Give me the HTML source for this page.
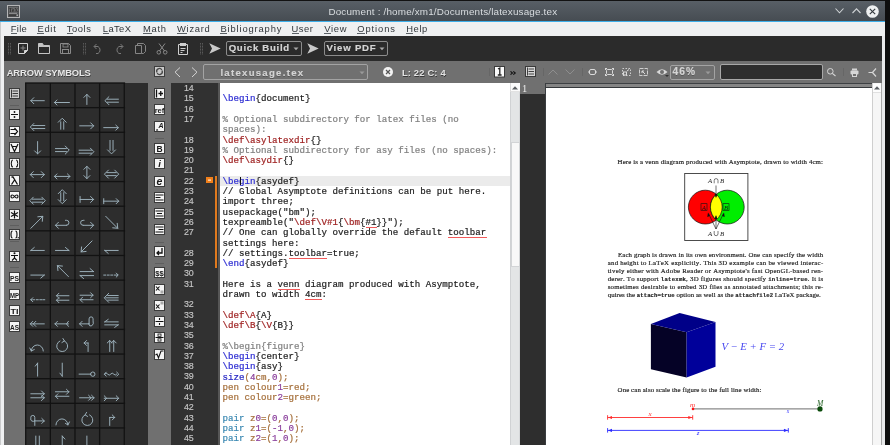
<!DOCTYPE html><html><head><meta charset="utf-8"><style>*{margin:0;padding:0;box-sizing:border-box}
html,body{width:890px;height:445px;overflow:hidden;background:#121212}
body{position:relative;-webkit-font-smoothing:antialiased}
.a{position:absolute}
.t{white-space:pre;font-kerning:none}
svg{overflow:visible}
</style></head><body><div id="root" class="a" style="left:0;top:0;width:890px;height:445px;will-change:transform"><div class="a" style="left:0px;top:1px;width:885px;height:444px;background:#eff0f1"></div>
<div class="a" style="left:0px;top:1px;width:1px;height:444px;background:#c9cacb"></div>
<div class="a" style="left:0px;top:1px;width:885px;height:20px;background:linear-gradient(#585f66,#464c52)"></div>
<div class="a" style="left:0px;top:21px;width:885px;height:1px;background:#3daee9"></div>
<svg class="a" style="left:7px;top:5px;" width="13" height="13" viewBox="0 0 13 13"><rect x="0.5" y="0.5" width="12" height="12" fill="#4e5052" stroke="#b4b5b6"/><rect x="2" y="2" width="9" height="5.5" fill="#6a6b6c"/><text x="6.5" y="6.6" font-size="5.5" font-family="Liberation Serif" font-weight="bold" fill="#333" text-anchor="middle">TeX</text><rect x="2" y="7.8" width="8" height="1" fill="#9a9a9a"/><rect x="2" y="9.5" width="7" height="1.6" fill="#3a3a3a"/><rect x="9.5" y="9.5" width="1.5" height="1.5" fill="#aaa"/></svg>
<div class="a t" style="left:328.40px;top:7.12px;font:9.9px/9.9px 'Liberation Sans',sans-serif;color:#d9dde0;letter-spacing:0.170px;">Document : /home/xm1/Documents/latexusage.tex</div>
<svg class="a" style="left:835px;top:8px;" width="9" height="6" viewBox="0 0 9 6"><polyline points="0.5,0.5 4.5,4.8 8.5,0.5" fill="none" stroke="#cfd3d6" stroke-width="1.1"/></svg>
<svg class="a" style="left:852px;top:8px;" width="9" height="6" viewBox="0 0 9 6"><polyline points="0.5,5 4.5,0.8 8.5,5" fill="none" stroke="#cfd3d6" stroke-width="1.1"/></svg>
<svg class="a" style="left:866px;top:5px;" width="13" height="13" viewBox="0 0 13 13"><circle cx="6.5" cy="6.5" r="6.3" fill="#eef0f1"/><path d="M3.8,3.8 L9.2,9.2 M9.2,3.8 L3.8,9.2" stroke="#31363b" stroke-width="1.1"/></svg>
<div class="a t" style="left:10.80px;top:23.54px;font:9.4px/9.4px 'Liberation Sans',sans-serif;color:#31363b;letter-spacing:0.263px;">File</div>
<div class="a" style="left:11px;top:33px;width:6px;height:1px;background:#5b6166"></div>
<div class="a t" style="left:37.40px;top:23.54px;font:9.4px/9.4px 'Liberation Sans',sans-serif;color:#31363b;letter-spacing:0.751px;">Edit</div>
<div class="a" style="left:37px;top:33px;width:7px;height:1px;background:#5b6166"></div>
<div class="a t" style="left:66.70px;top:23.54px;font:9.4px/9.4px 'Liberation Sans',sans-serif;color:#31363b;letter-spacing:0.603px;">Tools</div>
<div class="a" style="left:67px;top:33px;width:6px;height:1px;background:#5b6166"></div>
<div class="a t" style="left:102.80px;top:23.54px;font:9.4px/9.4px 'Liberation Sans',sans-serif;color:#31363b;letter-spacing:0.401px;">LaTeX</div>
<div class="a" style="left:103px;top:33px;width:6px;height:1px;background:#5b6166"></div>
<div class="a t" style="left:143.00px;top:23.54px;font:9.4px/9.4px 'Liberation Sans',sans-serif;color:#31363b;letter-spacing:0.726px;">Math</div>
<div class="a" style="left:143px;top:33px;width:9px;height:1px;background:#5b6166"></div>
<div class="a t" style="left:177.00px;top:23.54px;font:9.4px/9.4px 'Liberation Sans',sans-serif;color:#31363b;letter-spacing:0.726px;">Wizard</div>
<div class="a" style="left:177px;top:33px;width:10px;height:1px;background:#5b6166"></div>
<div class="a t" style="left:220.40px;top:23.54px;font:9.4px/9.4px 'Liberation Sans',sans-serif;color:#31363b;letter-spacing:0.856px;">Bibliography</div>
<div class="a" style="left:220px;top:33px;width:7px;height:1px;background:#5b6166"></div>
<div class="a t" style="left:291.50px;top:23.54px;font:9.4px/9.4px 'Liberation Sans',sans-serif;color:#31363b;letter-spacing:0.538px;">User</div>
<div class="a" style="left:292px;top:33px;width:7px;height:1px;background:#5b6166"></div>
<div class="a t" style="left:324.30px;top:23.54px;font:9.4px/9.4px 'Liberation Sans',sans-serif;color:#31363b;letter-spacing:0.656px;">View</div>
<div class="a" style="left:324px;top:33px;width:7px;height:1px;background:#5b6166"></div>
<div class="a t" style="left:357.30px;top:23.54px;font:9.4px/9.4px 'Liberation Sans',sans-serif;color:#31363b;letter-spacing:0.901px;">Options</div>
<div class="a" style="left:357px;top:33px;width:8px;height:1px;background:#5b6166"></div>
<div class="a t" style="left:406.20px;top:23.54px;font:9.4px/9.4px 'Liberation Sans',sans-serif;color:#31363b;letter-spacing:0.617px;">Help</div>
<div class="a" style="left:406px;top:33px;width:7px;height:1px;background:#5b6166"></div>
<div class="a" style="left:4px;top:36px;width:878px;height:25px;background:#2b2b2b"></div>
<svg class="a" style="left:7.5px;top:43px;" width="3" height="12" viewBox="0 0 3 12"><rect x="0" y="0.0" width="1" height="0.9" fill="#5e5e5e"/><rect x="0" y="1.5" width="1" height="0.9" fill="#5e5e5e"/><rect x="0" y="3.0" width="1" height="0.9" fill="#5e5e5e"/><rect x="0" y="4.5" width="1" height="0.9" fill="#5e5e5e"/><rect x="0" y="6.0" width="1" height="0.9" fill="#5e5e5e"/><rect x="0" y="7.5" width="1" height="0.9" fill="#5e5e5e"/><rect x="0" y="9.0" width="1" height="0.9" fill="#5e5e5e"/><rect x="0" y="10.5" width="1" height="0.9" fill="#5e5e5e"/><rect x="2" y="0.0" width="1" height="0.9" fill="#5e5e5e"/><rect x="2" y="1.5" width="1" height="0.9" fill="#5e5e5e"/><rect x="2" y="3.0" width="1" height="0.9" fill="#5e5e5e"/><rect x="2" y="4.5" width="1" height="0.9" fill="#5e5e5e"/><rect x="2" y="6.0" width="1" height="0.9" fill="#5e5e5e"/><rect x="2" y="7.5" width="1" height="0.9" fill="#5e5e5e"/><rect x="2" y="9.0" width="1" height="0.9" fill="#5e5e5e"/><rect x="2" y="10.5" width="1" height="0.9" fill="#5e5e5e"/></svg>
<svg class="a" style="left:82.5px;top:43px;" width="3" height="12" viewBox="0 0 3 12"><rect x="0" y="0.0" width="1" height="0.9" fill="#5e5e5e"/><rect x="0" y="1.5" width="1" height="0.9" fill="#5e5e5e"/><rect x="0" y="3.0" width="1" height="0.9" fill="#5e5e5e"/><rect x="0" y="4.5" width="1" height="0.9" fill="#5e5e5e"/><rect x="0" y="6.0" width="1" height="0.9" fill="#5e5e5e"/><rect x="0" y="7.5" width="1" height="0.9" fill="#5e5e5e"/><rect x="0" y="9.0" width="1" height="0.9" fill="#5e5e5e"/><rect x="0" y="10.5" width="1" height="0.9" fill="#5e5e5e"/><rect x="2" y="0.0" width="1" height="0.9" fill="#5e5e5e"/><rect x="2" y="1.5" width="1" height="0.9" fill="#5e5e5e"/><rect x="2" y="3.0" width="1" height="0.9" fill="#5e5e5e"/><rect x="2" y="4.5" width="1" height="0.9" fill="#5e5e5e"/><rect x="2" y="6.0" width="1" height="0.9" fill="#5e5e5e"/><rect x="2" y="7.5" width="1" height="0.9" fill="#5e5e5e"/><rect x="2" y="9.0" width="1" height="0.9" fill="#5e5e5e"/><rect x="2" y="10.5" width="1" height="0.9" fill="#5e5e5e"/></svg>
<svg class="a" style="left:199.5px;top:43px;" width="3" height="12" viewBox="0 0 3 12"><rect x="0" y="0.0" width="1" height="0.9" fill="#5e5e5e"/><rect x="0" y="1.5" width="1" height="0.9" fill="#5e5e5e"/><rect x="0" y="3.0" width="1" height="0.9" fill="#5e5e5e"/><rect x="0" y="4.5" width="1" height="0.9" fill="#5e5e5e"/><rect x="0" y="6.0" width="1" height="0.9" fill="#5e5e5e"/><rect x="0" y="7.5" width="1" height="0.9" fill="#5e5e5e"/><rect x="0" y="9.0" width="1" height="0.9" fill="#5e5e5e"/><rect x="0" y="10.5" width="1" height="0.9" fill="#5e5e5e"/><rect x="2" y="0.0" width="1" height="0.9" fill="#5e5e5e"/><rect x="2" y="1.5" width="1" height="0.9" fill="#5e5e5e"/><rect x="2" y="3.0" width="1" height="0.9" fill="#5e5e5e"/><rect x="2" y="4.5" width="1" height="0.9" fill="#5e5e5e"/><rect x="2" y="6.0" width="1" height="0.9" fill="#5e5e5e"/><rect x="2" y="7.5" width="1" height="0.9" fill="#5e5e5e"/><rect x="2" y="9.0" width="1" height="0.9" fill="#5e5e5e"/><rect x="2" y="10.5" width="1" height="0.9" fill="#5e5e5e"/></svg>
<svg class="a" style="left:17px;top:42px;" width="12" height="13" viewBox="0 0 12 13"><path d="M1.5,1.5 H10.5 V8.5 L7.5,11.5 H1.5 Z" fill="none" stroke="#d4d4d4" stroke-width="1"/><path d="M7.5,11.5 V8.5 H10.5" fill="#d4d4d4" stroke="#d4d4d4"/><path d="M6,3.5 V8.5 M3.5,6 H8.5" stroke="#8a8a8a" stroke-width="1"/></svg>
<svg class="a" style="left:37px;top:42px;" width="14" height="13" viewBox="0 0 14 13"><path d="M1.5,1.5 H5.5 L6.5,3.5 H12.5 V11.5 H1.5 Z" fill="none" stroke="#c4c4c4"/><path d="M1.5,1.5 H5.5 L6.5,3.5 H12.5 V5 H1.5 Z" fill="#c4c4c4"/></svg>
<svg class="a" style="left:59px;top:42px;" width="13" height="13" viewBox="0 0 13 13"><path d="M1.5,1.5 H9.5 L11.5,3.5 V11.5 H1.5 Z" fill="none" stroke="#8a8a8a"/><rect x="4" y="2" width="5" height="3" fill="none" stroke="#8a8a8a" stroke-width="0.9"/><rect x="3.5" y="7.5" width="6" height="4" fill="none" stroke="#8a8a8a"/></svg>
<svg class="a" style="left:93px;top:43px;" width="10" height="11" viewBox="0 0 10 11"><path d="M3.5,1 L1,3.5 L3.5,6 M1.2,3.5 H5 A4,4 0 0 1 5,10.5 H3" fill="none" stroke="#7a7a7a" stroke-width="1"/></svg>
<svg class="a" style="left:114px;top:43px;" width="10" height="11" viewBox="0 0 10 11"><path d="M6.5,1 L9,3.5 L6.5,6 M8.8,3.5 H5 A4,4 0 0 0 5,10.5 H7" fill="none" stroke="#7a7a7a" stroke-width="1"/></svg>
<svg class="a" style="left:135px;top:43px;" width="11" height="12" viewBox="0 0 11 12"><path d="M0.5,2.5 H6.5 V10.5 H0.5 Z" fill="none" stroke="#858585"/><path d="M2.5,0.5 H8.5 L10.5,2.5 V8.5 L8.5,10.5 H6.5" fill="none" stroke="#858585"/><path d="M2.5,2.5 V0.5" stroke="#858585"/></svg>
<svg class="a" style="left:156px;top:43px;" width="12" height="12" viewBox="0 0 12 12"><path d="M3,0.5 L8.5,8 M9,0.5 L3.5,8" stroke="#8a8a8a" stroke-width="1"/><circle cx="2.8" cy="9.3" r="1.8" fill="none" stroke="#8a8a8a"/><circle cx="9.2" cy="9.3" r="1.8" fill="none" stroke="#8a8a8a"/></svg>
<svg class="a" style="left:177px;top:42px;" width="12" height="13" viewBox="0 0 12 13"><path d="M1.5,2.5 H10.5 V12.5 H1.5 Z" fill="none" stroke="#cfcfcf"/><rect x="3" y="1" width="6" height="3" fill="#cfcfcf"/><path d="M3.5,6.5 H8.5 M3.5,8.5 H7.5 M3.5,10.5 H5.5" stroke="#cfcfcf"/></svg>
<svg class="a" style="left:209.3px;top:43px;" width="12" height="11" viewBox="0 0 12 11"><path d="M0.3,0.3 L11.7,5.5 L0.3,10.7 L3,5.5 Z" fill="#c9c9c9"/></svg>
<svg class="a" style="left:307.3px;top:43px;" width="12" height="11" viewBox="0 0 12 11"><path d="M0.3,0.3 L11.7,5.5 L0.3,10.7 L3,5.5 Z" fill="#c9c9c9"/></svg>
<div class="a" style="left:226.2px;top:41px;width:75.4px;height:14.8px;border:1px solid #8c8c8c;border-radius:2px;background:none"></div>
<div class="a t" style="left:228.70px;top:43.37px;font:bold 9.6px/9.6px 'Liberation Sans',sans-serif;color:#d5d5d5;letter-spacing:0.724px;text-shadow:0 1px 0 rgba(0,0,0,0.35);-webkit-text-stroke:0.2px">Quick Build</div>
<svg class="a" style="left:292.6px;top:46.9px;" width="6" height="4" viewBox="0 0 6 4"><path d="M0.5,0.5 L5.5,0.5 L3,3.2 Z" fill="#a8a8a8"/></svg>
<div class="a" style="left:324.1px;top:41px;width:64.3px;height:14.8px;border:1px solid #8c8c8c;border-radius:2px;background:none"></div>
<div class="a t" style="left:326.60px;top:43.37px;font:bold 9.6px/9.6px 'Liberation Sans',sans-serif;color:#d5d5d5;letter-spacing:0.795px;text-shadow:0 1px 0 rgba(0,0,0,0.35);-webkit-text-stroke:0.2px">View PDF</div>
<svg class="a" style="left:379.40000000000003px;top:46.9px;" width="6" height="4" viewBox="0 0 6 4"><path d="M0.5,0.5 L5.5,0.5 L3,3.2 Z" fill="#a8a8a8"/></svg>
<!--REST-->
<div class="a" style="left:4px;top:61px;width:878px;height:22px;background:#707070"></div>
<div class="a t" style="left:6.70px;top:68.24px;font:bold 9.4px/9.4px 'Liberation Sans',sans-serif;color:#e8e8e8;letter-spacing:-0.103px;text-shadow:0.5px 1px 0 rgba(0,0,0,0.45)">ARROW SYMBOLS</div>
<svg class="a" style="left:154px;top:66px;" width="11" height="11" viewBox="0 0 11 11"><rect x="0.5" y="0.5" width="10" height="10" fill="#c9c9c9" stroke="#3e3e3e"/><path d="M3,6.5 A2.6,2.6 0 0 1 7.8,4 M8,4.5 A2.6,2.6 0 0 1 3.2,7" fill="none" stroke="#4a4a4a" stroke-width="1.3"/></svg>
<svg class="a" style="left:173.5px;top:66.5px;" width="7" height="11" viewBox="0 0 7 11"><polyline points="6,0.5 1,5.2 6,10" fill="none" stroke="#d4d4d4" stroke-width="1"/></svg>
<svg class="a" style="left:190.5px;top:66.5px;" width="7" height="11" viewBox="0 0 7 11"><polyline points="1,0.5 6,5.2 1,10" fill="none" stroke="#d4d4d4" stroke-width="1"/></svg>
<div class="a" style="left:203.2px;top:64.4px;width:165px;height:15.3px;border:1px solid #a3a3a3;border-radius:2px"></div>
<div class="a t" style="left:220.40px;top:67.87px;font:bold 9.6px/9.6px 'Liberation Sans',sans-serif;color:#d4d4d4;letter-spacing:1.274px;text-shadow:0 1px 0 rgba(0,0,0,0.25);-webkit-text-stroke:0.2px">latexusage.tex</div>
<svg class="a" style="left:359px;top:71px;" width="6" height="4" viewBox="0 0 6 4"><path d="M0.5,0.5 L5.5,0.5 L3,3.2 Z" fill="#9a9a9a"/></svg>
<svg class="a" style="left:383px;top:67px;" width="10" height="10" viewBox="0 0 10 10"><circle cx="5" cy="5" r="5" fill="#f2f2f2"/><path d="M3,3 L7,7 M7,3 L3,7" stroke="#555" stroke-width="1.2"/></svg>
<div class="a t" style="left:401.90px;top:67.94px;font:bold 9.4px/9.4px 'Liberation Sans',sans-serif;color:#e2e2e2;letter-spacing:0.169px;text-shadow:0.5px 1px 0 rgba(0,0,0,0.5)">L: 22 C: 4</div>
<div class="a" style="left:489px;top:68px;width:1px;height:8px;background:#666"></div>
<svg class="a" style="left:493.8px;top:66px;" width="11" height="11.5" viewBox="0 0 11 11.5"><rect x="0.5" y="0.5" width="10" height="10.5" fill="#fafafa" stroke="#3a3a3a"/><path d="M4,3 L5.8,2 V9 M3.8,9 H7.6" fill="none" stroke="#222" stroke-width="1.3"/></svg>
<svg class="a" style="left:510px;top:70.5px;" width="6" height="4" viewBox="0 0 6 4"><path d="M0.5,0.3 L2.5,2 L0.5,3.7 M3.3,0.3 L5.3,2 L3.3,3.7" fill="none" stroke="#111" stroke-width="1.1"/></svg>
<svg class="a" style="left:525.2px;top:66.4px;" width="11" height="11" viewBox="0 0 11 11"><rect x="0.5" y="0.5" width="10" height="10" fill="#d6d6d6" stroke="#3a3a3a"/><path d="M2.5,1.5 V9.5 M3.5,3 H9 M3.5,5.5 H9 M3.5,8 H9" stroke="#444" stroke-width="1"/></svg>
<div class="a" style="left:543px;top:68px;width:1px;height:8px;background:#666"></div>
<svg class="a" style="left:548px;top:69px;" width="10" height="6" viewBox="0 0 10 6"><polyline points="0.5,5.5 5,1 9.5,5.5" fill="none" stroke="#8e8e8e" stroke-width="1"/></svg>
<svg class="a" style="left:565px;top:69px;" width="10" height="6" viewBox="0 0 10 6"><polyline points="0.5,0.5 5,5 9.5,0.5" fill="none" stroke="#8e8e8e" stroke-width="1"/></svg>
<div class="a" style="left:582px;top:68px;width:1px;height:8px;background:#666"></div>
<svg class="a" style="left:588px;top:69px;" width="9" height="6" viewBox="0 0 9 6"><rect x="1.5" y="0.5" width="6" height="5" rx="1.5" fill="none" stroke="#dadada"/><path d="M0,3 H1.5 M7.5,3 H9" stroke="#dadada"/></svg>
<svg class="a" style="left:605px;top:68px;" width="9" height="8" viewBox="0 0 9 8"><rect x="1.5" y="1.5" width="6" height="5" rx="1" fill="none" stroke="#dadada"/><path d="M0.5,0 V2 M0,0.5 H2 M8.5,0 V2 M7,0.5 H9 M0.5,6 V8 M0,7.5 H2 M8.5,6 V8 M7,7.5 H9" stroke="#dadada"/></svg>
<svg class="a" style="left:622px;top:68px;" width="9" height="8" viewBox="0 0 9 8"><rect x="0.5" y="0.5" width="8" height="7" fill="none" stroke="#cfcfcf" stroke-dasharray="1.5,1.5"/><rect x="1.5" y="4" width="3" height="3" fill="none" stroke="#dadada"/><path d="M5,3 L7,1.5" stroke="#dadada"/></svg>
<svg class="a" style="left:639px;top:68px;" width="9" height="8" viewBox="0 0 9 8"><rect x="0.5" y="0.5" width="8" height="7" fill="none" stroke="#cfcfcf" stroke-dasharray="4,1"/><path d="M3,3 L6,6 M3,3 H5 M3,3 V5" stroke="#dadada"/></svg>
<svg class="a" style="left:655.5px;top:68px;" width="13" height="9" viewBox="0 0 13 9"><path d="M0.5,4 Q6,-1.5 11.5,4 Q6,9.5 0.5,4 Z" fill="#d8d8d8"/><circle cx="6" cy="4" r="2" fill="#707070"/><path d="M9,7 L13,7 L11,9 Z" fill="#333"/></svg>
<div class="a" style="left:670.1px;top:64.5px;width:44.5px;height:15.1px;border:1px solid #a3a3a3;border-radius:2px"></div>
<div class="a t" style="left:672.60px;top:67.37px;font:bold 10.2px/10.2px 'Liberation Sans',sans-serif;color:#d4d4d4;letter-spacing:0.995px;text-shadow:0 1px 0 rgba(0,0,0,0.25);-webkit-text-stroke:0.2px">46%</div>
<svg class="a" style="left:705px;top:71px;" width="6" height="4" viewBox="0 0 6 4"><path d="M0.5,0.5 L5.5,0.5 L3,3.2 Z" fill="#9a9a9a"/></svg>
<div class="a" style="left:720.2px;top:64px;width:102.5px;height:15.5px;border:1px solid #a8a8a8;border-radius:2px;background:#2e2e2e"></div>
<svg class="a" style="left:827px;top:68px;" width="9" height="8" viewBox="0 0 9 8"><circle cx="3.3" cy="3.3" r="2.8" fill="none" stroke="#d6d6d6" stroke-width="1"/><path d="M5.3,5.3 L8.5,8" stroke="#d6d6d6" stroke-width="1.1"/></svg>
<div class="a" style="left:843px;top:68px;width:1px;height:8px;background:#666"></div>
<svg class="a" style="left:850px;top:67.5px;" width="9" height="8.5" viewBox="0 0 9 8.5"><rect x="2" y="0.5" width="5" height="2" fill="#d6d6d6"/><rect x="0.5" y="2.5" width="8" height="4" rx="1" fill="#d6d6d6"/><rect x="2.5" y="5.5" width="4" height="3" fill="#707070" stroke="#d6d6d6"/></svg>
<svg class="a" style="left:867.5px;top:67.5px;" width="9" height="9" viewBox="0 0 9 9"><path d="M0.5,4.5 L4.5,4.5 L8,0.5 M4.5,4.5 L8,8.5" fill="none" stroke="#d6d6d6" stroke-width="1.2"/></svg>
<div class="a" style="left:4px;top:83px;width:167px;height:362px;background:#707070"></div>
<div class="a" style="left:25.8px;top:83px;width:122.2px;height:362px;background:#2d2d2d"></div>
<svg class="a" style="left:25px;top:83px;" width="123" height="362" viewBox="0 0 123 362"><rect x="0.05" y="0" width="1.3" height="362" fill="#121212"/><rect x="24.69" y="0" width="1.3" height="362" fill="#121212"/><rect x="49.33" y="0" width="1.3" height="362" fill="#121212"/><rect x="73.97" y="0" width="1.3" height="362" fill="#121212"/><rect x="98.61" y="0" width="1.3" height="362" fill="#121212"/><rect x="0.05" y="-0.65" width="100.06" height="1.3" fill="#121212"/><rect x="0.05" y="23.99" width="100.06" height="1.3" fill="#121212"/><rect x="0.05" y="48.63" width="100.06" height="1.3" fill="#121212"/><rect x="0.05" y="73.27" width="100.06" height="1.3" fill="#121212"/><rect x="0.05" y="97.91" width="100.06" height="1.3" fill="#121212"/><rect x="0.05" y="122.55" width="100.06" height="1.3" fill="#121212"/><rect x="0.05" y="147.19" width="100.06" height="1.3" fill="#121212"/><rect x="0.05" y="171.83" width="100.06" height="1.3" fill="#121212"/><rect x="0.05" y="196.47" width="100.06" height="1.3" fill="#121212"/><rect x="0.05" y="221.11" width="100.06" height="1.3" fill="#121212"/><rect x="0.05" y="245.75" width="100.06" height="1.3" fill="#121212"/><rect x="0.05" y="270.39" width="100.06" height="1.3" fill="#121212"/><rect x="0.05" y="295.03" width="100.06" height="1.3" fill="#121212"/><rect x="0.05" y="319.67" width="100.06" height="1.3" fill="#121212"/><rect x="0.05" y="344.31" width="100.06" height="1.3" fill="#121212"/><rect x="0.05" y="368.95" width="100.06" height="1.3" fill="#121212"/><g fill="none" stroke="#9fb4bf" stroke-width="0.95" stroke-linecap="round" stroke-linejoin="round"><path transform="translate(0.80,0.10)" d="M5,17.6H18.5M8,14.600000000000001L5,17.6L8,20.6"/><path transform="translate(25.44,0.10)" d="M4,19.4H19M6.5,16.9L4,19.4L6.5,21.9"/><path transform="translate(50.08,0.10)" d="M11.8,11.3V21.4M8.8,14.3L11.8,11.3L14.8,14.3"/><path transform="translate(74.72,0.10)" d="M7.5,16.1H18.7M7.5,19.1H18.7M9.2,13.600000000000001L5.2,17.6L9.2,21.6"/><path transform="translate(0.80,24.74)" d="M7,17.8H19M7,20.8H19M8.0,15.8L4.5,19.3L8.0,22.8"/><path transform="translate(25.44,24.74)" d="M10.3,14V21.5M13.3,14V21.5M7.800000000000001,14.5L11.8,10.5L15.8,14.5"/><path transform="translate(50.08,24.74)" d="M4.6,18.1H18.6M15.600000000000001,15.100000000000001L18.6,18.1L15.600000000000001,21.1"/><path transform="translate(74.72,24.74)" d="M4,19.9H18.6M16.1,17.4L18.6,19.9L16.1,22.4"/><path transform="translate(0.80,49.38)" d="M11.8,9.2V21.5M8.8,18.5L11.8,21.5L14.8,18.5"/><path transform="translate(25.44,49.38)" d="M5,16.2H16M5,19.2H16M14.8,13.7L18.8,17.7L14.8,21.7"/><path transform="translate(50.08,49.38)" d="M4,17.8H16.5M4,20.8H16.5M15.3,15.8L18.8,19.3L15.3,22.8"/><path transform="translate(74.72,49.38)" d="M10.3,8V18M13.3,8V18M7.800000000000001,17.5L11.8,21.5L15.8,17.5"/><path transform="translate(0.80,74.02)" d="M4.5,17.6H18.5M7.5,14.600000000000001L4.5,17.6L7.5,20.6M15.5,14.600000000000001L18.5,17.6L15.5,20.6"/><path transform="translate(25.44,74.02)" d="M4,19.4H19.5M6.5,16.9L4,19.4L6.5,21.9M17.0,16.9L19.5,19.4L17.0,21.9"/><path transform="translate(50.08,74.02)" d="M11.8,9.3V21.6M8.8,12.3L11.8,9.3L14.8,12.3M8.8,18.6L11.8,21.6L14.8,18.6"/><path transform="translate(74.72,74.02)" d="M7,15.600000000000001H16.5M7,18.6H16.5M8.7,13.100000000000001L4.7,17.1L8.7,21.1M15,13.100000000000001L19,17.1L15,21.1"/><path transform="translate(0.80,98.66)" d="M6.5,17.5H17M6.5,20.5H17M7.5,15.5L4,19L7.5,22.5M16.0,15.5L19.5,19L16.0,22.5"/><path transform="translate(25.44,98.66)" d="M10.3,11V19M13.3,11V19M7.800000000000001,12L11.8,8L15.8,12M7.800000000000001,18L11.8,22L15.8,18"/><path transform="translate(50.08,98.66)" d="M5,17.8H18.5M15.5,14.8L18.5,17.8L15.5,20.8M5,14.8V20.8"/><path transform="translate(74.72,98.66)" d="M4,19.5H19M16.5,17.0L19,19.5L16.5,22.0M4,17V22"/><path transform="translate(0.80,123.30)" d="M5,22L17,10M12,10.5L17,10L16.5,15"/><path transform="translate(25.44,123.30)" d="M5,19H16M8,16L5,19L8,22M16,19A2.5,2.5 0 0 0 16,14H15"/><path transform="translate(50.08,123.30)" d="M8,19H18.5M15.5,16L18.5,19L15.5,22M8,19A2.5,2.5 0 0 1 8,14H9"/><path transform="translate(74.72,123.30)" d="M6,10L18,22M13,21.5L18,22L17.5,17"/><path transform="translate(0.80,147.94)" d="M5,19.5H18.5M5,19.5L8.5,16.5"/><path transform="translate(25.44,147.94)" d="M5,19.5H18.5M18.5,19.5L15,16.5"/><path transform="translate(50.08,147.94)" d="M17,10L6,21M6.5,16L6,21L11,20.5"/><path transform="translate(74.72,147.94)" d="M5,19.5H18.5M5,19.5L8.5,22.5"/><path transform="translate(0.80,172.58)" d="M5,19.5H18.5M18.5,19.5L15,22.5"/><path transform="translate(25.44,172.58)" d="M7,10L18,21M7.5,15L7,10L12,10.5"/><path transform="translate(50.08,172.58)" d="M5,16H18.5M18.5,16L15,13M5,20H18.5M5,20L8.5,23"/><path transform="translate(74.72,172.58)" d="M4,19.5H6M7.5,19.5H9.5M11,19.5H13M14.5,19.5H18M16.5,17.5L18.5,19.5L16.5,21.5"/><path transform="translate(0.80,197.22)" d="M7,19.5H9M10.5,19.5H12.5M14,19.5H16M17,19.5H19M7,17.5L5,19.5L7,21.5M5,19.5H6"/><path transform="translate(25.44,197.22)" d="M6,15.5H18.5M8.5,13.0L6,15.5L8.5,18.0M6,20H18.5M8.5,17.5L6,20L8.5,22.5"/><path transform="translate(50.08,197.22)" d="M5,15H18M15.5,12.5L18,15L15.5,17.5M5,19.5H18M7.5,17.0L5,19.5L7.5,22.0"/><path transform="translate(74.72,197.22)" d="M8,15.3H18.5M6,17.6H18.5M8,19.9H18.5M9.0,13.100000000000001L4.5,17.6L9.0,22.1"/><path transform="translate(0.80,221.86)" d="M4.5,19H18.5M7.0,16.5L4.5,19L7.0,21.5M10.0,16.5L7.5,19L10.0,21.5"/><path transform="translate(25.44,221.86)" d="M4.5,19H18M7.0,16.5L4.5,19L7.0,21.5M18,16.5L16,19L18,21.5"/><path transform="translate(50.08,221.86)" d="M4.5,19H14M7.0,16.5L4.5,19L7.0,21.5M14,19V14A2,2 0 0 1 18,14V16A2,3 0 0 1 13.5,19"/><path transform="translate(74.72,221.86)" d="M5,17H18.5M5,17L8.5,14.5M5,20H18.5M18.5,20L15,22.5"/><path transform="translate(0.80,246.50)" d="M5.5,21.5A6,6 0 0 1 17.5,21.5M4,18.5L5.5,21.5L8.5,20"/><path transform="translate(25.44,246.50)" d="M9.5,11.5A5.5,5.5 0 1 0 14,11.5M12.5,9L14,11.5L11.5,13"/><path transform="translate(50.08,246.50)" d="M13,13.5V22M9,13.5H13M11.5,11.0L9,13.5L11.5,16.0"/><path transform="translate(74.72,246.50)" d="M10,11V22M7.5,13.5L10,11L12.5,13.5M14,11V22M11.5,13.5L14,11L16.5,13.5"/><path transform="translate(0.80,271.14)" d="M11.8,9V22M11.8,9L9.5,12"/><path transform="translate(25.44,271.14)" d="M11.8,9V22M11.8,22L9.5,19"/><path transform="translate(50.08,271.14)" d="M4,20H15.5M15.5,20A2.2,2.2 0 1 0 19.9,20A2.2,2.2 0 1 0 15.5,20"/><path transform="translate(74.72,271.14)" d="M5,20Q6.5,18 8,20T11,20T14,20T17,20M6.5,18L4.5,20L6.5,22M17,18L19,20L17,22"/><path transform="translate(0.80,295.78)" d="M5,15H18.5M15.7,12.2L18.5,15L15.7,17.8M5,19H18.5M15.7,16.2L18.5,19L15.7,21.8"/><path transform="translate(25.44,295.78)" d="M5,13H18.5M16.0,10.5L18.5,13L16.0,15.5M5,17.5H18.5M7.5,15.0L5,17.5L7.5,20.0"/><path transform="translate(50.08,295.78)" d="M4.5,19H19M16.5,16.5L19,19L16.5,21.5M13.5,16.5L16,19L13.5,21.5"/><path transform="translate(74.72,295.78)" d="M4.5,19.5H19M16.5,17.0L19,19.5L16.5,22.0M4.5,17L7,19.5L4.5,22"/><path transform="translate(0.80,320.42)" d="M9,17.5H18.5M16.0,15.0L18.5,17.5L16.0,20.0M9,22V14A2,2 0 0 0 5,14V15.5A2.5,2 0 0 0 9,17.5"/><path transform="translate(25.44,320.42)" d="M5.5,21.5A6,6 0 0 1 17.5,21.5M15,20L17.5,21.5L19,18.5"/><path transform="translate(50.08,320.42)" d="M10,11.5A5.5,5.5 0 1 0 14.5,11.5M11.5,9L10,11.5L12.5,13"/><path transform="translate(74.72,320.42)" d="M10,14V22M10,14H15M12.5,11.5L15,14L12.5,16.5"/><path transform="translate(0.80,345.06)" d="M10,8V22M13.5,8V22"/><path transform="translate(25.44,345.06)" d="M11.8,8V22M11.8,8L14.5,11"/><path transform="translate(50.08,345.06)" d="M11.8,8V22"/></g></svg>
<svg class="a" style="left:9px;top:88px;" width="11" height="11" viewBox="0 0 11 11"><rect x="0.5" y="0.5" width="10" height="10" fill="#cfcfcf" stroke="#3b3b3b"/><path d="M2.5,1.5V9.5M3.5,3H9M3.5,5.5H9M3.5,8H9" stroke="#3a3a3a" stroke-width="1"/></svg>
<svg class="a" style="left:9px;top:109.2px;" width="11" height="11" viewBox="0 0 11 11"><rect x="0.5" y="0.5" width="10" height="10" fill="#f4f4f4" stroke="#3b3b3b"/><path d="M2,5.5H9" stroke="#111" stroke-width="1"/><circle cx="5.5" cy="3" r="0.9" fill="#111"/><circle cx="5.5" cy="8" r="0.9" fill="#111"/></svg>
<svg class="a" style="left:9px;top:125.5px;" width="11" height="11" viewBox="0 0 11 11"><rect x="0.5" y="0.5" width="10" height="10" fill="#f4f4f4" stroke="#3b3b3b"/><path d="M1.5,3.5H6.5M1.5,7.5H6.5M5.5,2L8.5,5.5L5.5,9" fill="none" stroke="#111" stroke-width="1.2"/></svg>
<svg class="a" style="left:9px;top:141.7px;" width="11" height="11" viewBox="0 0 11 11"><rect x="0.5" y="0.5" width="10" height="10" fill="#f4f4f4" stroke="#3b3b3b"/><path d="M2,2L5.5,9.5L9,2M3.2,4.5H7.8" fill="none" stroke="#111" stroke-width="1.2"/></svg>
<svg class="a" style="left:9px;top:158px;" width="11" height="11" viewBox="0 0 11 11"><rect x="0.5" y="0.5" width="10" height="10" fill="#f4f4f4" stroke="#3b3b3b"/><path d="M4,2Q2.5,2 2.5,4Q2.5,5.5 1.8,5.5Q2.5,5.5 2.5,7Q2.5,9 4,9M7,2Q8.5,2 8.5,4Q8.5,5.5 9.2,5.5Q8.5,5.5 8.5,7Q8.5,9 7,9" fill="none" stroke="#111" stroke-width="1.1"/></svg>
<svg class="a" style="left:9px;top:175.2px;" width="11" height="11" viewBox="0 0 11 11"><rect x="0.5" y="0.5" width="10" height="10" fill="#f4f4f4" stroke="#3b3b3b"/><path d="M2.5,2H4L8.5,9.5M5.5,5L2.5,9.5" fill="none" stroke="#111" stroke-width="1.3"/></svg>
<svg class="a" style="left:9px;top:191.4px;" width="11" height="11" viewBox="0 0 11 11"><rect x="0.5" y="0.5" width="10" height="10" fill="#f4f4f4" stroke="#3b3b3b"/><path d="M5.5,5.5C4,3.5 2,3.5 2,5.5C2,7.5 4,7.5 5.5,5.5C7,3.5 9,3.5 9,5.5C9,7.5 7,7.5 5.5,5.5Z" fill="none" stroke="#111" stroke-width="1.2"/></svg>
<svg class="a" style="left:9px;top:208.6px;" width="11" height="11" viewBox="0 0 11 11"><rect x="0.5" y="0.5" width="10" height="10" fill="#f4f4f4" stroke="#3b3b3b"/><path d="M5.5,1.5V9.5M2,3.5L9,7.5M9,3.5L2,7.5" fill="none" stroke="#111" stroke-width="1.2"/></svg>
<svg class="a" style="left:9px;top:228.8px;" width="11" height="11" viewBox="0 0 11 11"><rect x="0.5" y="0.5" width="10" height="10" fill="#f4f4f4" stroke="#3b3b3b"/><path d="M3.5,2Q2,2 2,5.5Q2,9 3.5,9M6.5,2Q8,2 8,5.5Q8,9 6.5,9" fill="none" stroke="#111" stroke-width="1.1"/><circle cx="9.2" cy="8.8" r="0.7" fill="#111"/></svg>
<svg class="a" style="left:9px;top:251px;" width="11" height="11" viewBox="0 0 11 11"><rect x="0.5" y="0.5" width="10" height="10" fill="#f4f4f4" stroke="#3b3b3b"/><circle cx="5.5" cy="2.3" r="1" fill="#111"/><path d="M2,4.5H9M5.5,4V7M5.5,7L3,9.5M5.5,7L8,9.5" fill="none" stroke="#111" stroke-width="1.1"/></svg>
<svg class="a" style="left:9px;top:272.4px;" width="11" height="11" viewBox="0 0 11 11"><rect x="0.5" y="0.5" width="10" height="10" fill="#f4f4f4" stroke="#3b3b3b"/><text x="5.5" y="8.8" font-family="Liberation Sans" font-size="7" font-weight='bold'  text-anchor="middle" fill="#1a1a1a" textLength="9" lengthAdjust="spacingAndGlyphs">PS</text></svg>
<svg class="a" style="left:9px;top:288.6px;" width="11" height="11" viewBox="0 0 11 11"><rect x="0.5" y="0.5" width="10" height="10" fill="#f4f4f4" stroke="#3b3b3b"/><text x="5.5" y="8.8" font-family="Liberation Sans" font-size="7" font-weight='bold'  text-anchor="middle" fill="#1a1a1a" textLength="9" lengthAdjust="spacingAndGlyphs">MP</text></svg>
<svg class="a" style="left:9px;top:304.8px;" width="11" height="11" viewBox="0 0 11 11"><rect x="0.5" y="0.5" width="10" height="10" fill="#f4f4f4" stroke="#3b3b3b"/><text x="5.5" y="8.8" font-family="Liberation Sans" font-size="7" font-weight='bold'  text-anchor="middle" fill="#1a1a1a" textLength="8" lengthAdjust="spacingAndGlyphs">TI</text></svg>
<svg class="a" style="left:9px;top:321px;" width="11" height="11" viewBox="0 0 11 11"><rect x="0.5" y="0.5" width="10" height="10" fill="#f4f4f4" stroke="#3b3b3b"/><text x="5.5" y="8.8" font-family="Liberation Sans" font-size="7" font-weight='bold'  text-anchor="middle" fill="#1a1a1a" textLength="9" lengthAdjust="spacingAndGlyphs">AS</text></svg>
<div class="a" style="left:10px;top:104.5px;width:9px;height:1px;background:#5e5e5e"></div>
<div class="a" style="left:10px;top:224.8px;width:9px;height:1px;background:#5e5e5e"></div>
<div class="a" style="left:10px;top:240.5px;width:9px;height:1px;background:#5e5e5e"></div>
<div class="a" style="left:10px;top:267.3px;width:9px;height:1px;background:#5e5e5e"></div>
<svg class="a" style="left:154.4px;top:88px;" width="11" height="11" viewBox="0 0 11 11"><rect x="0.5" y="0.5" width="10" height="10" fill="#f4f4f4" stroke="#3b3b3b"/><path d="M2.5,1.5V9.5M4.5,5.5H9M6.75,3V8" stroke="#111" stroke-width="1.3"/></svg>
<svg class="a" style="left:154.4px;top:104.3px;" width="11" height="11" viewBox="0 0 11 11"><rect x="0.5" y="0.5" width="10" height="10" fill="#f4f4f4" stroke="#3b3b3b"/><text x="5.5" y="9.2" font-family="Liberation Sans" font-size="8" font-weight='bold'  text-anchor="middle" fill="#1a1a1a" textLength="9.6" lengthAdjust="spacingAndGlyphs">ref</text></svg>
<svg class="a" style="left:154.4px;top:121.4px;" width="11" height="11" viewBox="0 0 11 11"><rect x="0.5" y="0.5" width="10" height="10" fill="#f4f4f4" stroke="#3b3b3b"/><text x="7" y="7.2" font-family="Liberation Sans" font-size="7" font-weight='bold' font-style='italic' text-anchor="middle" fill="#1a1a1a" >A</text><text x="3" y="9.6" font-family="Liberation Sans" font-size="4" font-weight='bold'  text-anchor="middle" fill="#1a1a1a" >a</text></svg>
<svg class="a" style="left:154.4px;top:142.5px;" width="11" height="11" viewBox="0 0 11 11"><rect x="0.5" y="0.5" width="10" height="10" fill="#f4f4f4" stroke="#3b3b3b"/><text x="5.5" y="9" font-family="Liberation Sans" font-size="8.5" font-weight='bold'  text-anchor="middle" fill="#1a1a1a" >B</text></svg>
<svg class="a" style="left:154.4px;top:158.3px;" width="11" height="11" viewBox="0 0 11 11"><rect x="0.5" y="0.5" width="10" height="10" fill="#f4f4f4" stroke="#3b3b3b"/><text x="5.5" y="9.3" font-family="Liberation Sans" font-size="9.5" font-weight='bold' font-style='italic' text-anchor="middle" fill="#1a1a1a" >i</text></svg>
<svg class="a" style="left:154.4px;top:175.5px;" width="11" height="11" viewBox="0 0 11 11"><rect x="0.5" y="0.5" width="10" height="10" fill="#f4f4f4" stroke="#3b3b3b"/><text x="5.3" y="9" font-family="Liberation Sans" font-size="10.5" font-weight='bold' font-style='italic' text-anchor="middle" fill="#1a1a1a" >e</text></svg>
<svg class="a" style="left:154.4px;top:191.8px;" width="11" height="11" viewBox="0 0 11 11"><rect x="0.5" y="0.5" width="10" height="10" fill="#f4f4f4" stroke="#3b3b3b"/><path d="M1.5,3H9.5M1.5,5.5H6.5M1.5,8H9.5" stroke="#111" stroke-width="1.1"/></svg>
<svg class="a" style="left:154.4px;top:208.2px;" width="11" height="11" viewBox="0 0 11 11"><rect x="0.5" y="0.5" width="10" height="10" fill="#f4f4f4" stroke="#3b3b3b"/><path d="M1.5,3H9.5M3,5.5H8M1.5,8H9.5" stroke="#111" stroke-width="1.1"/></svg>
<svg class="a" style="left:154.4px;top:224.2px;" width="11" height="11" viewBox="0 0 11 11"><rect x="0.5" y="0.5" width="10" height="10" fill="#f4f4f4" stroke="#3b3b3b"/><path d="M1.5,3H9.5M4.5,5.5H9.5M1.5,8H9.5" stroke="#111" stroke-width="1.1"/></svg>
<svg class="a" style="left:154.4px;top:246px;" width="11" height="11" viewBox="0 0 11 11"><rect x="0.5" y="0.5" width="10" height="10" fill="#f4f4f4" stroke="#3b3b3b"/><path d="M8,2V7H3M5,5L3,7L5,9" fill="none" stroke="#111" stroke-width="1.3"/></svg>
<svg class="a" style="left:154.4px;top:267px;" width="11" height="11" viewBox="0 0 11 11"><rect x="0.5" y="0.5" width="10" height="10" fill="#f4f4f4" stroke="#3b3b3b"/><text x="5.5" y="8.8" font-family="Liberation Sans" font-size="7.5" font-weight='bold'  text-anchor="middle" fill="#1a1a1a" textLength="8.5" lengthAdjust="spacingAndGlyphs">$$</text></svg>
<svg class="a" style="left:154.4px;top:283.8px;" width="11" height="11" viewBox="0 0 11 11"><rect x="0.5" y="0.5" width="10" height="10" fill="#f4f4f4" stroke="#3b3b3b"/><path d="M2,2.5L5.5,6.5M5.5,2.5L2,6.5" stroke="#111" stroke-width="1.1"/><rect x="6.5" y="6.5" width="3" height="3" fill="#aaa"/></svg>
<svg class="a" style="left:154.4px;top:299.9px;" width="11" height="11" viewBox="0 0 11 11"><rect x="0.5" y="0.5" width="10" height="10" fill="#f4f4f4" stroke="#3b3b3b"/><path d="M2,4.5L5.5,8.5M5.5,4.5L2,8.5" stroke="#111" stroke-width="1.1"/><rect x="6.5" y="1.5" width="3" height="3" fill="#aaa"/></svg>
<svg class="a" style="left:154.4px;top:316px;" width="11" height="11" viewBox="0 0 11 11"><rect x="0.5" y="0.5" width="10" height="10" fill="#f4f4f4" stroke="#3b3b3b"/><path d="M1.5,5.5H9.5M5.5,2V4M5.5,7V9" stroke="#111" stroke-width="1.1"/></svg>
<svg class="a" style="left:154.4px;top:332.3px;" width="11" height="11" viewBox="0 0 11 11"><rect x="0.5" y="0.5" width="10" height="10" fill="#f4f4f4" stroke="#3b3b3b"/><path d="M1.5,5.5H9.5" stroke="#111" stroke-width="1"/><rect x="4" y="2" width="3" height="2.3" fill="none" stroke="#111" stroke-width="0.8"/><rect x="4" y="6.8" width="3" height="2.3" fill="none" stroke="#111" stroke-width="0.8"/></svg>
<svg class="a" style="left:154.4px;top:349.4px;" width="11" height="11" viewBox="0 0 11 11"><rect x="0.5" y="0.5" width="10" height="10" fill="#f4f4f4" stroke="#3b3b3b"/><path d="M1.5,6L3,5L4.5,9L7,2H9.5" fill="none" stroke="#111" stroke-width="1.1"/></svg>
<div class="a" style="left:155px;top:137.6px;width:9px;height:1px;background:#5e5e5e"></div>
<div class="a" style="left:155px;top:242px;width:9px;height:1px;background:#5e5e5e"></div>
<div class="a" style="left:155px;top:262.8px;width:9px;height:1px;background:#5e5e5e"></div>
<div class="a" style="left:171px;top:83px;width:47px;height:362px;background:#313131"></div>
<div class="a" style="left:217.5px;top:83px;width:2.3px;height:362px;background:#565656"></div>
<div class="a" style="left:219.8px;top:83px;width:290.4px;height:362px;background:#fff"></div>
<div class="a" style="left:219.8px;top:175.7px;width:290.4px;height:10.3px;background:#ebebeb"></div>
<div class="a t" style="left:183.90px;top:84.07px;font:8.9px/8.9px 'Liberation Sans',sans-serif;color:#c6c6c6;letter-spacing:0.000px;-webkit-text-stroke:0.15px">14</div>
<div class="a t" style="left:183.90px;top:94.37px;font:8.9px/8.9px 'Liberation Sans',sans-serif;color:#c6c6c6;letter-spacing:0.000px;-webkit-text-stroke:0.15px">15</div>
<div class="a t" style="left:222.50px;top:94.47px;font:9.166666666666668px/9.166666666666668px 'Liberation Mono',monospace;color:#1c1c1c;letter-spacing:0.000px;-webkit-text-stroke:0.2px"><span style="color:#2a2ad2">\begin</span><span style="color:#1c1c1c">{document}</span></div>
<div class="a t" style="left:183.90px;top:104.67px;font:8.9px/8.9px 'Liberation Sans',sans-serif;color:#c6c6c6;letter-spacing:0.000px;-webkit-text-stroke:0.15px">16</div>
<div class="a t" style="left:183.90px;top:114.97px;font:8.9px/8.9px 'Liberation Sans',sans-serif;color:#c6c6c6;letter-spacing:0.000px;-webkit-text-stroke:0.15px">17</div>
<div class="a t" style="left:222.50px;top:115.07px;font:9.166666666666668px/9.166666666666668px 'Liberation Mono',monospace;color:#1c1c1c;letter-spacing:0.000px;-webkit-text-stroke:0.2px"><span style="color:#808080">% Optional subdirectory for latex files (no</span></div>
<div class="a t" style="left:222.50px;top:125.37px;font:9.166666666666668px/9.166666666666668px 'Liberation Mono',monospace;color:#1c1c1c;letter-spacing:0.000px;-webkit-text-stroke:0.2px"><span style="color:#808080">spaces):</span></div>
<div class="a t" style="left:183.90px;top:135.57px;font:8.9px/8.9px 'Liberation Sans',sans-serif;color:#c6c6c6;letter-spacing:0.000px;-webkit-text-stroke:0.15px">18</div>
<div class="a t" style="left:222.50px;top:135.67px;font:9.166666666666668px/9.166666666666668px 'Liberation Mono',monospace;color:#1c1c1c;letter-spacing:0.000px;-webkit-text-stroke:0.2px"><span style="color:#9c1b1b">\def\asylatexdir</span><span style="color:#1c1c1c">{}</span></div>
<div class="a t" style="left:183.90px;top:145.87px;font:8.9px/8.9px 'Liberation Sans',sans-serif;color:#c6c6c6;letter-spacing:0.000px;-webkit-text-stroke:0.15px">19</div>
<div class="a t" style="left:222.50px;top:145.97px;font:9.166666666666668px/9.166666666666668px 'Liberation Mono',monospace;color:#1c1c1c;letter-spacing:0.000px;-webkit-text-stroke:0.2px"><span style="color:#808080">% Optional subdirectory for asy files (no spaces):</span></div>
<div class="a t" style="left:183.90px;top:156.17px;font:8.9px/8.9px 'Liberation Sans',sans-serif;color:#c6c6c6;letter-spacing:0.000px;-webkit-text-stroke:0.15px">20</div>
<div class="a t" style="left:222.50px;top:156.27px;font:9.166666666666668px/9.166666666666668px 'Liberation Mono',monospace;color:#1c1c1c;letter-spacing:0.000px;-webkit-text-stroke:0.2px"><span style="color:#9c1b1b">\def\asydir</span><span style="color:#1c1c1c">{}</span></div>
<div class="a t" style="left:183.90px;top:166.47px;font:8.9px/8.9px 'Liberation Sans',sans-serif;color:#c6c6c6;letter-spacing:0.000px;-webkit-text-stroke:0.15px">21</div>
<div class="a t" style="left:183.90px;top:176.77px;font:8.9px/8.9px 'Liberation Sans',sans-serif;color:#c6c6c6;letter-spacing:0.000px;-webkit-text-stroke:0.15px">22</div>
<div class="a t" style="left:222.50px;top:176.87px;font:9.166666666666668px/9.166666666666668px 'Liberation Mono',monospace;color:#1c1c1c;letter-spacing:0.000px;-webkit-text-stroke:0.2px"><span style="color:#2a2ad2">\begin</span><span style="color:#1c1c1c">{asydef}</span></div>
<div class="a t" style="left:183.90px;top:187.07px;font:8.9px/8.9px 'Liberation Sans',sans-serif;color:#c6c6c6;letter-spacing:0.000px;-webkit-text-stroke:0.15px">23</div>
<div class="a t" style="left:222.50px;top:187.17px;font:9.166666666666668px/9.166666666666668px 'Liberation Mono',monospace;color:#1c1c1c;letter-spacing:0.000px;-webkit-text-stroke:0.2px"><span style="color:#1c1c1c">// Global Asymptote definitions can be put here.</span></div>
<div class="a t" style="left:183.90px;top:197.37px;font:8.9px/8.9px 'Liberation Sans',sans-serif;color:#c6c6c6;letter-spacing:0.000px;-webkit-text-stroke:0.15px">24</div>
<div class="a t" style="left:222.50px;top:197.47px;font:9.166666666666668px/9.166666666666668px 'Liberation Mono',monospace;color:#1c1c1c;letter-spacing:0.000px;-webkit-text-stroke:0.2px"><span style="color:#1c1c1c">import three;</span></div>
<div class="a t" style="left:183.90px;top:207.67px;font:8.9px/8.9px 'Liberation Sans',sans-serif;color:#c6c6c6;letter-spacing:0.000px;-webkit-text-stroke:0.15px">25</div>
<div class="a t" style="left:222.50px;top:207.77px;font:9.166666666666668px/9.166666666666668px 'Liberation Mono',monospace;color:#1c1c1c;letter-spacing:0.000px;-webkit-text-stroke:0.2px"><span style="color:#1c1c1c">usepackage(&quot;bm&quot;);</span></div>
<div class="a t" style="left:183.90px;top:217.97px;font:8.9px/8.9px 'Liberation Sans',sans-serif;color:#c6c6c6;letter-spacing:0.000px;-webkit-text-stroke:0.15px">26</div>
<div class="a t" style="left:222.50px;top:218.07px;font:9.166666666666668px/9.166666666666668px 'Liberation Mono',monospace;color:#1c1c1c;letter-spacing:0.000px;-webkit-text-stroke:0.2px"><span style="color:#1c1c1c">texpreamble(&quot;</span><span style="color:#9c1b1b">\def\V#1</span><span style="color:#1c1c1c">{</span><span style="color:#9c1b1b">\bm</span><span style="color:#1c1c1c">{#1}}</span><span style="color:#1c1c1c">&quot;);</span></div>
<div class="a t" style="left:183.90px;top:228.27px;font:8.9px/8.9px 'Liberation Sans',sans-serif;color:#c6c6c6;letter-spacing:0.000px;-webkit-text-stroke:0.15px">27</div>
<div class="a t" style="left:222.50px;top:228.37px;font:9.166666666666668px/9.166666666666668px 'Liberation Mono',monospace;color:#1c1c1c;letter-spacing:0.000px;-webkit-text-stroke:0.2px"><span style="color:#1c1c1c">// One can globally override the default toolbar</span></div>
<div class="a t" style="left:222.50px;top:238.67px;font:9.166666666666668px/9.166666666666668px 'Liberation Mono',monospace;color:#1c1c1c;letter-spacing:0.000px;-webkit-text-stroke:0.2px"><span style="color:#1c1c1c">settings here:</span></div>
<div class="a t" style="left:183.90px;top:248.87px;font:8.9px/8.9px 'Liberation Sans',sans-serif;color:#c6c6c6;letter-spacing:0.000px;-webkit-text-stroke:0.15px">28</div>
<div class="a t" style="left:222.50px;top:248.97px;font:9.166666666666668px/9.166666666666668px 'Liberation Mono',monospace;color:#1c1c1c;letter-spacing:0.000px;-webkit-text-stroke:0.2px"><span style="color:#1c1c1c">// settings.toolbar=true;</span></div>
<div class="a t" style="left:183.90px;top:259.17px;font:8.9px/8.9px 'Liberation Sans',sans-serif;color:#c6c6c6;letter-spacing:0.000px;-webkit-text-stroke:0.15px">29</div>
<div class="a t" style="left:222.50px;top:259.27px;font:9.166666666666668px/9.166666666666668px 'Liberation Mono',monospace;color:#1c1c1c;letter-spacing:0.000px;-webkit-text-stroke:0.2px"><span style="color:#2a2ad2">\end</span><span style="color:#1c1c1c">{asydef}</span></div>
<div class="a t" style="left:183.90px;top:269.47px;font:8.9px/8.9px 'Liberation Sans',sans-serif;color:#c6c6c6;letter-spacing:0.000px;-webkit-text-stroke:0.15px">30</div>
<div class="a t" style="left:183.90px;top:279.77px;font:8.9px/8.9px 'Liberation Sans',sans-serif;color:#c6c6c6;letter-spacing:0.000px;-webkit-text-stroke:0.15px">31</div>
<div class="a t" style="left:222.50px;top:279.87px;font:9.166666666666668px/9.166666666666668px 'Liberation Mono',monospace;color:#1c1c1c;letter-spacing:0.000px;-webkit-text-stroke:0.2px"><span style="color:#1c1c1c">Here is a venn diagram produced with Asymptote,</span></div>
<div class="a t" style="left:222.50px;top:290.17px;font:9.166666666666668px/9.166666666666668px 'Liberation Mono',monospace;color:#1c1c1c;letter-spacing:0.000px;-webkit-text-stroke:0.2px"><span style="color:#1c1c1c">drawn to width 4cm:</span></div>
<div class="a t" style="left:183.90px;top:300.37px;font:8.9px/8.9px 'Liberation Sans',sans-serif;color:#c6c6c6;letter-spacing:0.000px;-webkit-text-stroke:0.15px">32</div>
<div class="a t" style="left:183.90px;top:310.67px;font:8.9px/8.9px 'Liberation Sans',sans-serif;color:#c6c6c6;letter-spacing:0.000px;-webkit-text-stroke:0.15px">33</div>
<div class="a t" style="left:222.50px;top:310.77px;font:9.166666666666668px/9.166666666666668px 'Liberation Mono',monospace;color:#1c1c1c;letter-spacing:0.000px;-webkit-text-stroke:0.2px"><span style="color:#9c1b1b">\def\A</span><span style="color:#1c1c1c">{A}</span></div>
<div class="a t" style="left:183.90px;top:320.97px;font:8.9px/8.9px 'Liberation Sans',sans-serif;color:#c6c6c6;letter-spacing:0.000px;-webkit-text-stroke:0.15px">34</div>
<div class="a t" style="left:222.50px;top:321.07px;font:9.166666666666668px/9.166666666666668px 'Liberation Mono',monospace;color:#1c1c1c;letter-spacing:0.000px;-webkit-text-stroke:0.2px"><span style="color:#9c1b1b">\def\B</span><span style="color:#1c1c1c">{</span><span style="color:#9c1b1b">\V</span><span style="color:#1c1c1c">{B}}</span></div>
<div class="a t" style="left:183.90px;top:331.27px;font:8.9px/8.9px 'Liberation Sans',sans-serif;color:#c6c6c6;letter-spacing:0.000px;-webkit-text-stroke:0.15px">35</div>
<div class="a t" style="left:183.90px;top:341.57px;font:8.9px/8.9px 'Liberation Sans',sans-serif;color:#c6c6c6;letter-spacing:0.000px;-webkit-text-stroke:0.15px">36</div>
<div class="a t" style="left:222.50px;top:341.67px;font:9.166666666666668px/9.166666666666668px 'Liberation Mono',monospace;color:#1c1c1c;letter-spacing:0.000px;-webkit-text-stroke:0.2px"><span style="color:#808080">%\begin{figure}</span></div>
<div class="a t" style="left:183.90px;top:351.87px;font:8.9px/8.9px 'Liberation Sans',sans-serif;color:#c6c6c6;letter-spacing:0.000px;-webkit-text-stroke:0.15px">37</div>
<div class="a t" style="left:222.50px;top:351.97px;font:9.166666666666668px/9.166666666666668px 'Liberation Mono',monospace;color:#1c1c1c;letter-spacing:0.000px;-webkit-text-stroke:0.2px"><span style="color:#2a2ad2">\begin</span><span style="color:#1c1c1c">{center}</span></div>
<div class="a t" style="left:183.90px;top:362.17px;font:8.9px/8.9px 'Liberation Sans',sans-serif;color:#c6c6c6;letter-spacing:0.000px;-webkit-text-stroke:0.15px">38</div>
<div class="a t" style="left:222.50px;top:362.27px;font:9.166666666666668px/9.166666666666668px 'Liberation Mono',monospace;color:#1c1c1c;letter-spacing:0.000px;-webkit-text-stroke:0.2px"><span style="color:#2a2ad2">\begin</span><span style="color:#1c1c1c">{asy}</span></div>
<div class="a t" style="left:183.90px;top:372.47px;font:8.9px/8.9px 'Liberation Sans',sans-serif;color:#c6c6c6;letter-spacing:0.000px;-webkit-text-stroke:0.15px">39</div>
<div class="a t" style="left:222.50px;top:372.57px;font:9.166666666666668px/9.166666666666668px 'Liberation Mono',monospace;color:#1c1c1c;letter-spacing:0.000px;-webkit-text-stroke:0.2px"><span style="color:#2626c4">size</span><span style="color:#a56f3a">(</span><span style="color:#8a3f9c">4</span><span style="color:#a56f3a">cm,</span><span style="color:#8a3f9c">0</span><span style="color:#a56f3a">);</span></div>
<div class="a t" style="left:183.90px;top:382.77px;font:8.9px/8.9px 'Liberation Sans',sans-serif;color:#c6c6c6;letter-spacing:0.000px;-webkit-text-stroke:0.15px">40</div>
<div class="a t" style="left:222.50px;top:382.87px;font:9.166666666666668px/9.166666666666668px 'Liberation Mono',monospace;color:#1c1c1c;letter-spacing:0.000px;-webkit-text-stroke:0.2px"><span style="color:#a56f3a">pen colour</span><span style="color:#8a3f9c">1</span><span style="color:#a56f3a">=red;</span></div>
<div class="a t" style="left:183.90px;top:393.07px;font:8.9px/8.9px 'Liberation Sans',sans-serif;color:#c6c6c6;letter-spacing:0.000px;-webkit-text-stroke:0.15px">41</div>
<div class="a t" style="left:222.50px;top:393.17px;font:9.166666666666668px/9.166666666666668px 'Liberation Mono',monospace;color:#1c1c1c;letter-spacing:0.000px;-webkit-text-stroke:0.2px"><span style="color:#a56f3a">pen colour</span><span style="color:#8a3f9c">2</span><span style="color:#a56f3a">=green;</span></div>
<div class="a t" style="left:183.90px;top:403.37px;font:8.9px/8.9px 'Liberation Sans',sans-serif;color:#c6c6c6;letter-spacing:0.000px;-webkit-text-stroke:0.15px">42</div>
<div class="a t" style="left:183.90px;top:413.67px;font:8.9px/8.9px 'Liberation Sans',sans-serif;color:#c6c6c6;letter-spacing:0.000px;-webkit-text-stroke:0.15px">43</div>
<div class="a t" style="left:222.50px;top:413.77px;font:9.166666666666668px/9.166666666666668px 'Liberation Mono',monospace;color:#1c1c1c;letter-spacing:0.000px;-webkit-text-stroke:0.2px"><span style="color:#3a88b2">pair</span><span style="color:#a56f3a"> z</span><span style="color:#8a3f9c">0</span><span style="color:#a56f3a">=(</span><span style="color:#8a3f9c">0</span><span style="color:#a56f3a">,</span><span style="color:#8a3f9c">0</span><span style="color:#a56f3a">);</span></div>
<div class="a t" style="left:183.90px;top:423.97px;font:8.9px/8.9px 'Liberation Sans',sans-serif;color:#c6c6c6;letter-spacing:0.000px;-webkit-text-stroke:0.15px">44</div>
<div class="a t" style="left:222.50px;top:424.07px;font:9.166666666666668px/9.166666666666668px 'Liberation Mono',monospace;color:#1c1c1c;letter-spacing:0.000px;-webkit-text-stroke:0.2px"><span style="color:#3a88b2">pair</span><span style="color:#a56f3a"> z</span><span style="color:#8a3f9c">1</span><span style="color:#a56f3a">=(</span><span style="color:#8a3f9c">-1</span><span style="color:#a56f3a">,</span><span style="color:#8a3f9c">0</span><span style="color:#a56f3a">);</span></div>
<div class="a t" style="left:183.90px;top:434.27px;font:8.9px/8.9px 'Liberation Sans',sans-serif;color:#c6c6c6;letter-spacing:0.000px;-webkit-text-stroke:0.15px">45</div>
<div class="a t" style="left:222.50px;top:434.37px;font:9.166666666666668px/9.166666666666668px 'Liberation Mono',monospace;color:#1c1c1c;letter-spacing:0.000px;-webkit-text-stroke:0.2px"><span style="color:#3a88b2">pair</span><span style="color:#a56f3a"> z</span><span style="color:#8a3f9c">2</span><span style="color:#a56f3a">=(</span><span style="color:#8a3f9c">1</span><span style="color:#a56f3a">,</span><span style="color:#8a3f9c">0</span><span style="color:#a56f3a">);</span></div>
<div class="a" style="left:448.0px;top:237.20000000000005px;width:38.5px;height:1.2px;background:#f25a5a"></div>
<div class="a" style="left:288.5px;top:257.8px;width:38.5px;height:1.2px;background:#f25a5a"></div>
<div class="a" style="left:277.5px;top:288.70000000000005px;width:22.0px;height:1.2px;background:#f25a5a"></div>
<div class="a" style="left:305.0px;top:299.0px;width:16.5px;height:1.2px;background:#f25a5a"></div>
<div class="a" style="left:365.5px;top:226.90000000000003px;width:11.0px;height:1.2px;background:#f25a5a"></div>
<div class="a" style="left:240.2px;top:176.5px;width:1px;height:8.9px;background:#111"></div>
<svg class="a" style="left:206px;top:177.4px;" width="7" height="6" viewBox="0 0 7 6"><rect x="0" y="0" width="7" height="6" fill="#f07f1a"/><rect x="2" y="2.6" width="3" height="1" fill="#fff"/></svg>
<div class="a" style="left:215px;top:175.7px;width:2.2px;height:92.30000000000001px;background:#e07a1e"></div>
<div class="a" style="left:510px;top:83px;width:9.5px;height:362px;background:#f7f7f7;border-left:1px solid #dadada"></div>
<div class="a" style="left:510px;top:83px;width:9.5px;height:8.8px;background:#fcfcfc;border-left:1px solid #dadada;border-bottom:1px solid #e2e2e2"></div>
<svg class="a" style="left:512px;top:85.5px;" width="6" height="4" viewBox="0 0 6 4"><path d="M0,3.5 L3,0.3 L6,3.5 Z" fill="#5a5e62"/></svg>
<div class="a" style="left:510px;top:91.8px;width:9.5px;height:353.2px;background:#e3e5e6;border-left:1px solid #d0d2d4;border-right:1px solid #d6d8da"></div>
<div class="a" style="left:510.5px;top:141.7px;width:9px;height:125.8px;background:#f8f8f8;border:1px solid #d2d4d6"></div>
<div class="a" style="left:520px;top:83px;width:25px;height:362px;background:#2e2e2e"></div>
<div class="a" style="left:520px;top:83px;width:25px;height:11px;background:#707070"></div>
<div class="a t" style="left:522.00px;top:83.71px;font:10.5px/10.5px 'Liberation Serif',serif;color:#ececec;letter-spacing:0.000px;">1</div>
<div class="a" style="left:545px;top:83px;width:327px;height:5px;background:#858585;border-top:1px solid #3d4043;border-bottom:1px solid #35383b;border-left:1px solid #3a3d40"></div>
<div class="a" style="left:545px;top:88px;width:327px;height:357px;background:#fff;border-left:1px solid #3a3d40"></div>
<div class="a" style="left:872px;top:83px;width:10px;height:362px;background:#f6f6f6;border-left:1px solid #cfcfcf;border-right:1px solid #a8a8a8"></div>
<div class="a" style="left:873px;top:84px;width:8px;height:8.5px;background:#fdfdfd;border-bottom:1px solid #e0e0e0"></div>
<svg class="a" style="left:874px;top:86px;" width="6" height="4" viewBox="0 0 6 4"><path d="M0,3.5 L3,0.3 L6,3.5 Z" fill="#5a5e62"/></svg>
<div class="a" style="left:882px;top:36px;width:3px;height:409px;background:#e9eaeb"></div>
<div class="a" style="left:885px;top:0px;width:5px;height:445px;background:#0e0e0e"></div>
<div class="a t" style="left:617.60px;top:159.31px;font:6.8px/6.8px 'Liberation Serif',serif;color:#262626;letter-spacing:0.160px;-webkit-text-stroke:0.18px #262626">Here is a venn diagram produced with Asymptote, drawn to width 4cm:</div>
<div class="a t" style="left:617.90px;top:252.00px;font-size:6.8px;line-height:6.8px;color:#262626;letter-spacing:0.158px;-webkit-text-stroke:0.18px #262626"><span style="font-family:'Liberation Serif',serif;font-weight:normal;font-size:6.8px">Each graph is drawn in its own environment. One can specify the width</span></div>
<div class="a t" style="left:607.70px;top:260.11px;font-size:6.8px;line-height:6.8px;color:#262626;letter-spacing:0.267px;-webkit-text-stroke:0.18px #262626"><span style="font-family:'Liberation Serif',serif;font-weight:normal;font-size:6.8px">and height to LaTeX explicitly. This 3D example can be viewed interac-</span></div>
<div class="a t" style="left:607.70px;top:267.70px;font-size:6.8px;line-height:6.8px;color:#262626;letter-spacing:0.266px;-webkit-text-stroke:0.18px #262626"><span style="font-family:'Liberation Serif',serif;font-weight:normal;font-size:6.8px">tively either with Adobe Reader or Asymptote&#x27;s fast OpenGL-based ren-</span></div>
<div class="a t" style="left:607.70px;top:276.00px;font-size:6.8px;line-height:6.8px;color:#262626;letter-spacing:0.248px;-webkit-text-stroke:0.18px #262626"><span style="font-family:'Liberation Serif',serif;font-weight:normal;font-size:6.8px">derer. To support </span><span style="font-family:'Liberation Mono',monospace;font-weight:bold;font-size:5.6px">latexmk</span><span style="font-family:'Liberation Serif',serif;font-weight:normal;font-size:6.8px">, 3D figures should specify </span><span style="font-family:'Liberation Mono',monospace;font-weight:bold;font-size:5.6px">inline=true</span><span style="font-family:'Liberation Serif',serif;font-weight:normal;font-size:6.8px">. It is</span></div>
<div class="a t" style="left:607.70px;top:284.11px;font-size:6.8px;line-height:6.8px;color:#262626;letter-spacing:0.249px;-webkit-text-stroke:0.18px #262626"><span style="font-family:'Liberation Serif',serif;font-weight:normal;font-size:6.8px">sometimes desirable to embed 3D files as annotated attachments; this re-</span></div>
<div class="a t" style="left:607.70px;top:292.11px;font-size:6.8px;line-height:6.8px;color:#262626;letter-spacing:0.077px;-webkit-text-stroke:0.18px #262626"><span style="font-family:'Liberation Serif',serif;font-weight:normal;font-size:6.8px">quires the </span><span style="font-family:'Liberation Mono',monospace;font-weight:bold;font-size:5.6px">attach=true</span><span style="font-family:'Liberation Serif',serif;font-weight:normal;font-size:6.8px"> option as well as the </span><span style="font-family:'Liberation Mono',monospace;font-weight:bold;font-size:5.6px">attachfile2</span><span style="font-family:'Liberation Serif',serif;font-weight:normal;font-size:6.8px"> LaTeX package.</span></div>
<div class="a t" style="left:617.60px;top:386.61px;font:6.8px/6.8px 'Liberation Serif',serif;color:#262626;letter-spacing:0.123px;-webkit-text-stroke:0.18px #262626">One can also scale the figure to the full line width:</div>
<svg class="a" style="left:0px;top:0px;pointer-events:none" width="890" height="445" viewBox="0 0 890 445"><rect x="684.7" y="173.5" width="63.2" height="67" fill="none" stroke="#3a3a3a" stroke-width="0.9"/><circle cx="705.3" cy="207.1" r="16.9" fill="#ff0000" stroke="#111" stroke-width="0.7"/><circle cx="727.3" cy="207.1" r="16.9" fill="#00ee00" stroke="#111" stroke-width="0.7"/><path d="M716.3,194.27 A16.9,16.9 0 0 1 716.3,219.93 A16.9,16.9 0 0 1 716.3,194.27 Z" fill="#ffff00" stroke="#111" stroke-width="0.7"/><rect x="701" y="203.7" width="6" height="6.8" fill="none" stroke="#111" stroke-width="0.6"/><text x="704" y="209.5" font-family="Liberation Serif" font-style="italic" font-size="6.5" text-anchor="middle" fill="#111">A</text><rect x="723" y="203.7" width="6" height="6.8" fill="none" stroke="#111" stroke-width="0.6"/><text x="726" y="209.5" font-family="Liberation Serif" font-style="italic" font-size="6.5" text-anchor="middle" fill="#111">B</text><text x="710.2" y="183.3" font-family="Liberation Serif" font-style="italic" font-size="6.8" text-anchor="middle" fill="#222">A</text><text x="722" y="183.3" font-family="Liberation Serif" font-style="italic" font-size="6.8" text-anchor="middle" fill="#222">B</text><path d="M714.2,183.3V180.5A1.9,1.9 0 0 1 718,180.5V183.3" fill="none" stroke="#222" stroke-width="0.6"/><text x="710.2" y="235.8" font-family="Liberation Serif" font-style="italic" font-size="6.8" text-anchor="middle" fill="#222">A</text><text x="722" y="235.8" font-family="Liberation Serif" font-style="italic" font-size="6.8" text-anchor="middle" fill="#222">B</text><path d="M714.2,231V233.8A1.9,1.9 0 0 0 718,233.8V231" fill="none" stroke="#222" stroke-width="0.6"/><path d="M716,185.5V197M716,229L716,216M716,229L708.5,213.5M716,229L723.5,213.5" stroke="#111" stroke-width="0.6" fill="none"/><path d="M714.6,194L716,198L717.4,194Z M714.6,219L716,215L717.4,219Z M707.3,217L708,212.5L709.9,216Z M722.1,216L724,212.5L724.7,217Z" fill="#111"/><path d="M650.9,324 L686.6,332.3 L686.6,377.5 L650.9,369.3 Z" fill="#050226"/><path d="M686.6,332.3 L715.5,322 L715.5,366.7 L686.6,377.5 Z" fill="#00009a"/><path d="M679.6,312.9 L715.5,322 L686.6,332.3 L650.9,324 Z" fill="#000088"/><text x="721.4" y="349.6" font-family="Liberation Serif" font-style="italic" font-size="10.2" fill="#4848f0" textLength="62.6" lengthAdjust="spacingAndGlyphs">V − E + F = 2</text><path d="M693,408.9H820" stroke="#8a8a8a" stroke-width="1.3"/><circle cx="693" cy="408.9" r="1.3" fill="#ff1010"/><circle cx="820" cy="408.9" r="2.6" fill="#0a4a0a"/><text x="692.5" y="406.5" font-family="Liberation Serif" font-style="italic" font-size="7" text-anchor="middle" fill="#ff2020">m</text><text x="820" y="406" font-family="Liberation Serif" font-style="italic" font-size="7.5" text-anchor="middle" fill="#1a5a1a">M</text><text x="788" y="412.5" font-family="Liberation Serif" font-style="italic" font-size="5.5" text-anchor="middle" fill="#3030ff">x</text><path d="M607.6,417.5H692.7M607.6,415.2V419.7M692.7,415.2V419.7" stroke="#ff2a2a" stroke-width="0.9"/><path d="M608,417.5L612,415.9L612,419.1Z M692.3,417.5L688.3,415.9L688.3,419.1Z" fill="#ff2a2a"/><text x="650" y="416" font-family="Liberation Serif" font-style="italic" font-size="7" text-anchor="middle" fill="#ff2a2a">x</text><path d="M607.6,430.4H788.3M607.6,428.1V432.6M788.3,428.1V432.6" stroke="#2a2aff" stroke-width="0.9"/><path d="M608,430.4L612,428.8L612,432Z M787.9,430.4L783.9,428.8L783.9,432Z" fill="#2a2aff"/><text x="698" y="435.3" font-family="Liberation Serif" font-style="italic" font-size="7" text-anchor="middle" fill="#2a2aff">z</text></svg></div></body></html>
